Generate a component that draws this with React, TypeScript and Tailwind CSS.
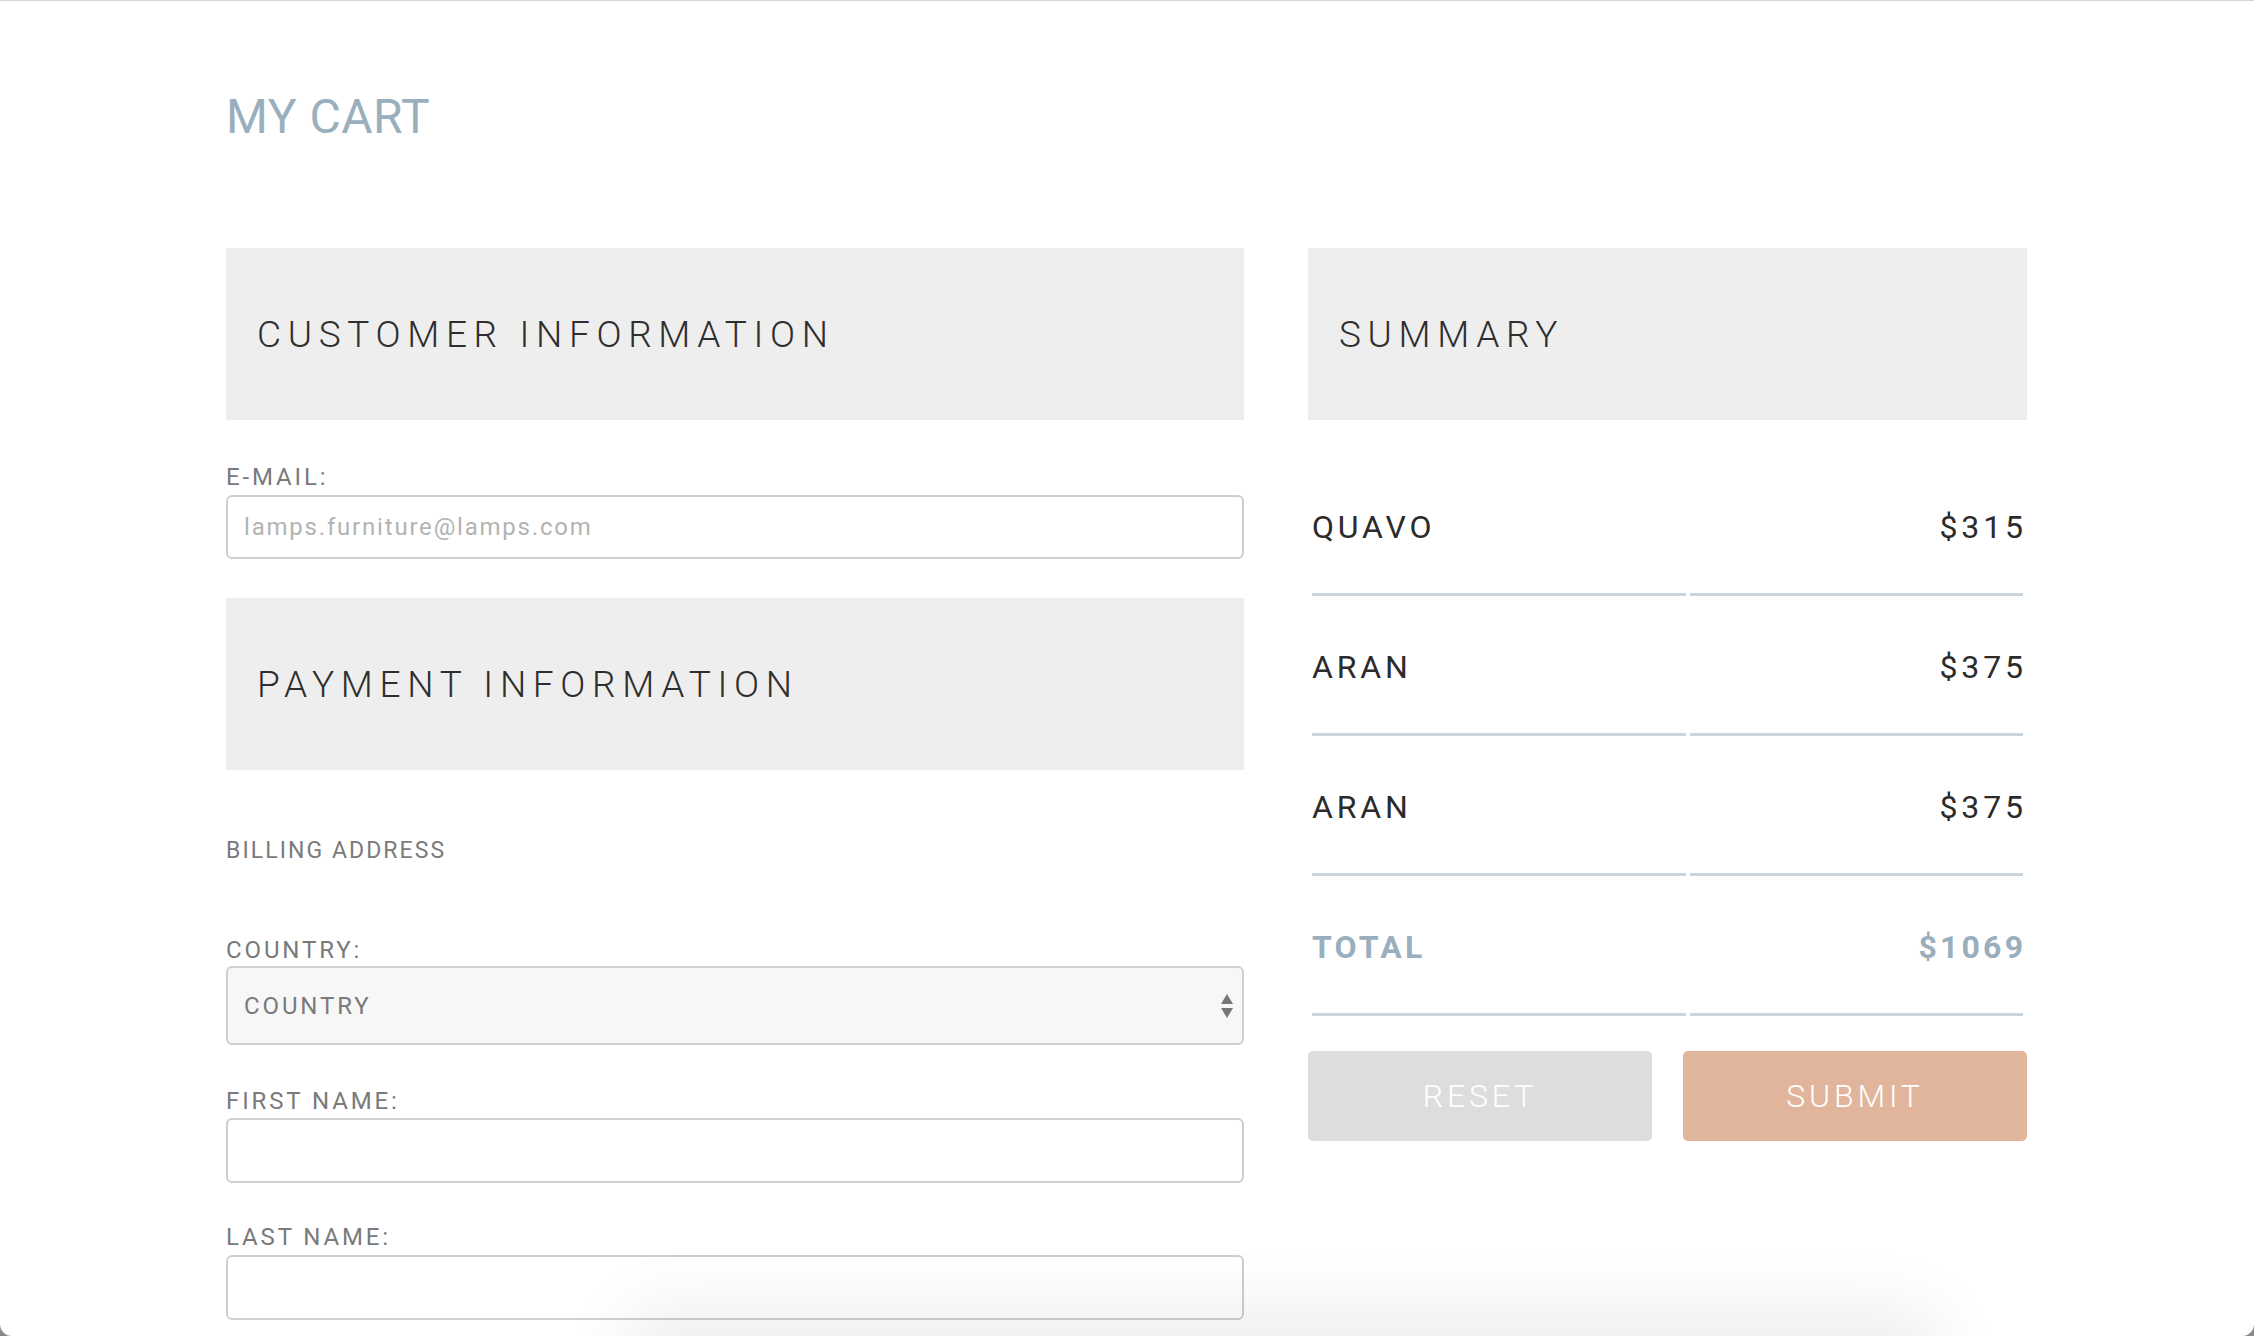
import React from "react";

const font = { fontFamily: "Roboto, 'Noto Sans', Arial, sans-serif" };

function Label({ children, className = "" }: { children: React.ReactNode; className?: string }) {
  return (
    <div className={`h-[28px] text-[24px] leading-[24px] tracking-[0.12em] text-[#7a7a7a] ${className}`}>
      {children}
    </div>
  );
}

function Heading({ children }: { children: React.ReactNode }) {
  return (
    <div className="h-[172px] bg-[#eeeeee] flex items-center pl-[31px]">
      <span className="text-[37px] font-light tracking-[0.18em] text-[#2e2e2e] leading-none">{children}</span>
    </div>
  );
}

const rows = [
  { name: "QUAVO", price: "$315" },
  { name: "ARAN", price: "$375" },
  { name: "ARAN", price: "$375" },
];

export default function App() {
  return (
    <div className="w-[2254px] h-[1336px] bg-[#8a8a8a] overflow-hidden" style={font}>
      <div className="relative w-full h-full bg-white rounded-b-[12px] border-t border-[#d6d6d6] overflow-hidden">
        <div className="pt-[92px] pl-[226px]">
          <h1 className="h-[48px] text-[48px] leading-[48px] font-normal text-[#9aafbd] tracking-[0.01em]">MY CART</h1>

          <div className="mt-[107px] flex gap-[64px]">
            {/* left column */}
            <div className="w-[1018px] flex flex-col">
              <Heading>CUSTOMER INFORMATION</Heading>
              <Label className="mt-[45px]">E-MAIL:</Label>
              <div className="mt-[2px] h-[64px] border-2 border-[#cfcfcf] rounded-[6px] bg-white flex items-center pl-[16px]">
                <span className="text-[24px] tracking-[0.075em] text-[#b3b3b3]">lamps.furniture@lamps.com</span>
              </div>

              <div className="mt-[39px]">
                <Heading>PAYMENT INFORMATION</Heading>
              </div>

              <div className="mt-[68px] h-[26px] text-[23px] leading-[26px] tracking-[0.09em] text-[#7a7a7a]">BILLING ADDRESS</div>

              <Label className="mt-[74px]">COUNTRY:</Label>
              <div className="h-[79px] border-2 border-[#cfcfcf] rounded-[6px] bg-[#f7f7f7] flex items-center justify-between pl-[16px] pr-[8px]">
                <span className="text-[24px] tracking-[0.12em] text-[#7a7a7a]">COUNTRY</span>
                <svg width="14" height="26" viewBox="0 0 14 26">
                  <polygon points="7,1 13,11 1,11" fill="#777777" />
                  <polygon points="1,15 13,15 7,25" fill="#777777" />
                </svg>
              </div>

              <Label className="mt-[44px]">FIRST NAME:</Label>
              <div className="mt-[1px] h-[65px] border-2 border-[#cfcfcf] rounded-[6px] bg-white" />

              <Label className="mt-[42px]">LAST NAME:</Label>
              <div className="mt-[2px] h-[65px] border-2 border-[#cfcfcf] rounded-[6px] bg-white" />
            </div>

            {/* right column */}
            <div className="w-[719px] flex flex-col">
              <Heading>SUMMARY</Heading>

              <div className="mt-[36px] grid grid-cols-[374px_1fr] gap-[4px] p-[4px]">
                {rows.map((r, i) => (
                  <React.Fragment key={i}>
                    <div className="h-[136px] border-b-[3px] border-[#cbd5de] flex items-center">
                      <span className="text-[32px] tracking-[0.12em] text-[#2b2b2b]">{r.name}</span>
                    </div>
                    <div className="h-[136px] border-b-[3px] border-[#cbd5de] flex items-center justify-end">
                      <span className="text-[32px] tracking-[0.12em] text-[#2b2b2b] mr-[-0.12em]">{r.price}</span>
                    </div>
                  </React.Fragment>
                ))}
                <div className="h-[136px] border-b-[3px] border-[#cbd5de] flex items-center">
                  <span className="text-[32px] font-bold tracking-[0.1em] text-[#9aafbd]">TOTAL</span>
                </div>
                <div className="h-[136px] border-b-[3px] border-[#cbd5de] flex items-center justify-end">
                  <span className="text-[32px] font-bold tracking-[0.1em] text-[#9aafbd] mr-[-0.1em]">$1069</span>
                </div>
              </div>

              <div className="mt-[31px] grid grid-cols-2 gap-[31px]">
                <button className="h-[90px] rounded-[5px] bg-[#dddddd] text-white text-[32px] font-light tracking-[0.12em]">RESET</button>
                <button className="h-[90px] rounded-[5px] bg-[#e0b59c] text-white text-[32px] font-light tracking-[0.12em]">SUBMIT</button>
              </div>
            </div>
          </div>
        </div>

        {/* shadow from element below the viewport */}
        <div className="absolute left-[650px] w-[1265px] top-[1336px] h-[40px] rounded-[20px] bg-white shadow-[0_0_70px_30px_rgba(0,0,0,0.07)]" />
      </div>
    </div>
  );
}
